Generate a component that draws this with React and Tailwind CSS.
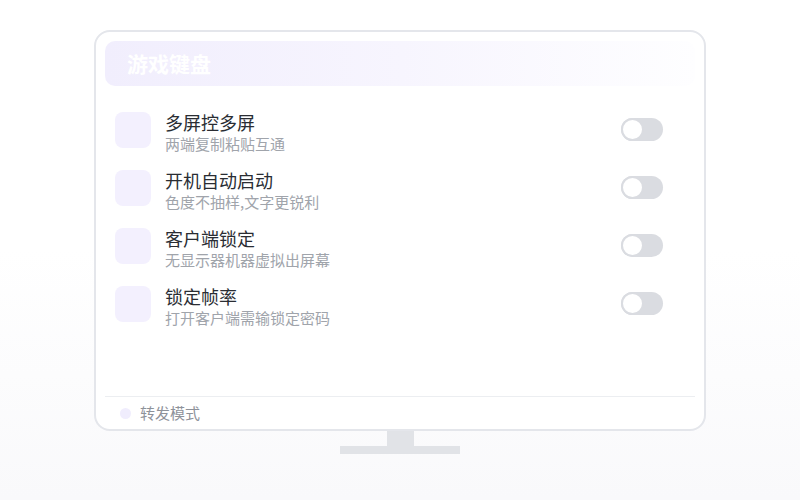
const settings = [
  { title: '多屏控多屏', desc: '两端复制粘贴互通' },
  { title: '开机自动启动', desc: '色度不抽样,文字更锐利' },
  { title: '客户端锁定', desc: '无显示器机器虚拟出屏幕' },
  { title: '锁定帧率', desc: '打开客户端需输锁定密码' },
];

function Toggle() {
  return (
    <div className="mt-[6px] flex h-[23px] w-[42px] items-center rounded-full bg-[#dadce1]">
      <div className="h-[23px] w-[23px] rounded-full border-2 border-[#dadce1] bg-white" />
    </div>
  );
}

export default function App() {
  return (
    <div
      className="flex h-[500px] w-[800px] flex-col items-center bg-gradient-to-b from-white from-50% to-[#f9f9fb] pt-[30px]"
      style={{ fontFamily: '"Noto Sans CJK SC", "Noto Sans", sans-serif' }}
    >
      <div className="flex h-[401px] w-[612px] flex-col rounded-[16px] border-2 border-[#e4e6eb] bg-white px-[9px] pt-[9px]">
        <div className="flex h-[45px] items-center rounded-[10px] bg-gradient-to-r from-[#f1eefd] via-[#f7f5fe] to-[#fefeff] pl-[22px]">
          <span className="text-[21px] font-bold text-white">游戏键盘</span>
        </div>

        <div className="flex flex-1 flex-col pl-[10px] pr-[32px] pt-[26px]">
          {settings.map((item) => (
            <div key={item.title} className="flex h-[58px] items-start">
              <div className="h-[36px] w-[36px] rounded-[8px] bg-[#f3f0fe]" />
              <div className="ml-[14px] flex flex-1 flex-col">
                <span className="text-[18px] leading-[20px] text-[#2a2d33]">{item.title}</span>
                <span className="mt-[2px] text-[15px] leading-[20px] text-[#a0a4ab]">{item.desc}</span>
              </div>
              <Toggle />
            </div>
          ))}
        </div>

        <div className="flex h-[33px] items-center border-t border-[#eceef1] pl-[15px]">
          <div className="h-[11px] w-[11px] rounded-full bg-[#f0edfd]" />
          <span className="ml-[9px] text-[15px] text-[#8e929a]">转发模式</span>
        </div>
      </div>

      <div className="h-[15px] w-[27px] bg-[#e1e3e7]" />
      <div className="h-[8px] w-[120px] bg-[#e1e3e7]" />
    </div>
  );
}
